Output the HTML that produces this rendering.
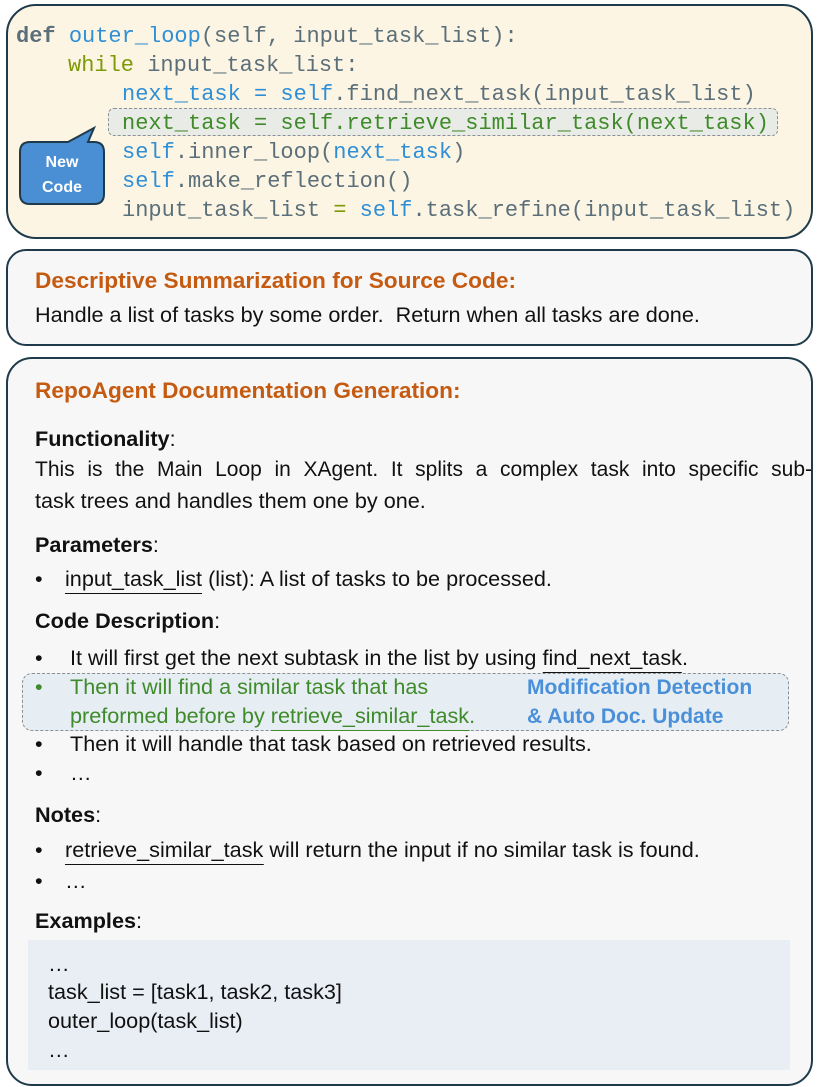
<!DOCTYPE html>
<html><head><meta charset="utf-8"><style>
body{margin:0;width:830px;height:1087px;background:#fff;position:relative;overflow:hidden;font-family:"Liberation Sans",sans-serif}
.box{position:absolute;border:2px solid #1f3b4b;box-sizing:border-box}
.l{position:absolute;white-space:pre;line-height:30px;height:30px;font-size:21px;color:#111;transform:scaleX(1.03);transform-origin:0 50%}
.h{color:#c55a11;font-weight:bold;font-size:22px}
.c{position:absolute;white-space:pre;font-family:"Liberation Mono",monospace;font-size:22px;line-height:29px;color:#5b6f7a}
.bl{color:#2f8fd6}.ol{color:#7d9a06}.gr{color:#3f8a2a}
u{text-decoration:none;border-bottom:1.5px solid #111;padding-bottom:2px}
.g{color:#3f8a2a}.g u{border-color:#3f8a2a}
.m{position:absolute;color:#4a90d9;font-weight:bold;font-size:21px;line-height:30px;white-space:pre;transform:scaleX(1.0);transform-origin:0 50%}
.j{position:absolute;left:35px;width:777px;font-size:21px;line-height:30px;height:30px;text-align:justify;text-align-last:justify;color:#111}
</style></head><body>
<div class="box" style="left:6px;top:4px;width:807px;height:235px;border-radius:30px;background:#fdf5e3"></div>
<div style="position:absolute;left:108px;top:108px;width:670px;height:28px;border:1.5px dashed #8a8f93;border-radius:6px;background:#e9ece6;box-sizing:border-box"></div>
<div class="c" style="left:16px;top:22px"><b>def</b> <span class="bl">outer_loop</span>(self, input_task_list):</div>
<div class="c" style="left:68px;top:51px"><span class="ol">while</span> input_task_list:</div>
<div class="c" style="left:122px;top:80px"><span class="bl">next_task = self</span>.find_next_task(input_task_list)</div>
<div class="c gr" style="left:122px;top:109px">next_task = self.retrieve_similar_task(next_task)</div>
<div class="c" style="left:122px;top:138px"><span class="bl">self</span>.inner_loop(<span class="bl">next_task</span>)</div>
<div class="c" style="left:122px;top:167px"><span class="bl">self</span>.make_reflection()</div>
<div class="c" style="left:122px;top:196px">input_task_list <span class="ol">=</span> <span class="bl">self</span>.task_refine(input_task_list)</div>
<svg style="position:absolute;left:0;top:0" width="120" height="220"><path d="M30 142 H68 L94 128 L88 142 H94 Q104 142 104 152 V194 Q104 204 94 204 H30 Q20 204 20 194 V152 Q20 142 30 142 Z" fill="#4a8fd4" stroke="#1f3b4b" stroke-width="2"/>
<text x="62" y="167" fill="#fff" font-family="Liberation Sans" font-weight="bold" font-size="16" text-anchor="middle">New</text>
<text x="62" y="192" fill="#fff" font-family="Liberation Sans" font-weight="bold" font-size="16" text-anchor="middle">Code</text></svg>

<div class="box" style="left:6px;top:249px;width:807px;height:97px;border-radius:20px;background:#f7f7f7"></div>
<div class="l h" style="left:35px;top:266px">Descriptive Summarization for Source Code:</div>
<div class="l" style="left:35px;top:301px">Handle a list of tasks by some order.  Return when all tasks are done.</div>

<div class="box" style="left:6px;top:357px;width:807px;height:729px;border-radius:26px;background:#f7f7f7"></div>
<div class="l h" style="left:35px;top:376px">RepoAgent Documentation Generation:</div>
<div class="l" style="left:35px;top:425px"><b>Functionality</b>:</div>
<div class="j" style="top:455px">This is the Main Loop in XAgent. It splits a complex task into specific sub-</div>
<div class="l" style="left:35px;top:487px">task trees and handles them one by one.</div>
<div class="l" style="left:35px;top:531px"><b>Parameters</b>:</div>
<div class="l" style="left:35px;top:565px">•</div><div class="l" style="left:65px;top:565px"><u>input_task_list</u> (list): A list of tasks to be processed.</div>
<div class="l" style="left:35px;top:607px"><b>Code Description</b>:</div>
<div style="position:absolute;left:22px;top:673px;width:767px;height:58px;border:1.5px dashed #8a8f93;border-radius:10px;background:#e6edf3;box-sizing:border-box"></div>
<div class="l" style="left:35px;top:644px">•</div><div class="l" style="left:70px;top:644px">It will first get the next subtask in the list by using <u>find_next_task</u>.</div>
<div class="l g" style="left:35px;top:673px">•</div><div class="l g" style="left:70px;top:673px">Then it will find a similar task that has</div>
<div class="l g" style="left:70px;top:702px">preformed before by <u>retrieve_similar_task</u>.</div>
<div class="m" style="left:527px;top:673px">Modification Detection</div>
<div class="m" style="left:527px;top:702px">&amp; Auto Doc. Update</div>
<div class="l" style="left:35px;top:730px">•</div><div class="l" style="left:70px;top:730px">Then it will handle that task based on retrieved results.</div>
<div class="l" style="left:35px;top:759px">•</div><div class="l" style="left:70px;top:759px">…</div>
<div class="l" style="left:35px;top:801px"><b>Notes</b>:</div>
<div class="l" style="left:35px;top:836px">•</div><div class="l" style="left:65px;top:836px"><u>retrieve_similar_task</u> will return the input if no similar task is found.</div>
<div class="l" style="left:35px;top:867px">•</div><div class="l" style="left:65px;top:867px">…</div>
<div class="l" style="left:35px;top:907px"><b>Examples</b>:</div>
<div style="position:absolute;left:28px;top:940px;width:762px;height:130px;background:#e9eef5"></div>
<div class="l" style="left:48px;top:950px">…</div>
<div class="l" style="left:48px;top:978px">task_list = [task1, task2, task3]</div>
<div class="l" style="left:48px;top:1007px">outer_loop(task_list)</div>
<div class="l" style="left:48px;top:1036px">…</div>
</body></html>
